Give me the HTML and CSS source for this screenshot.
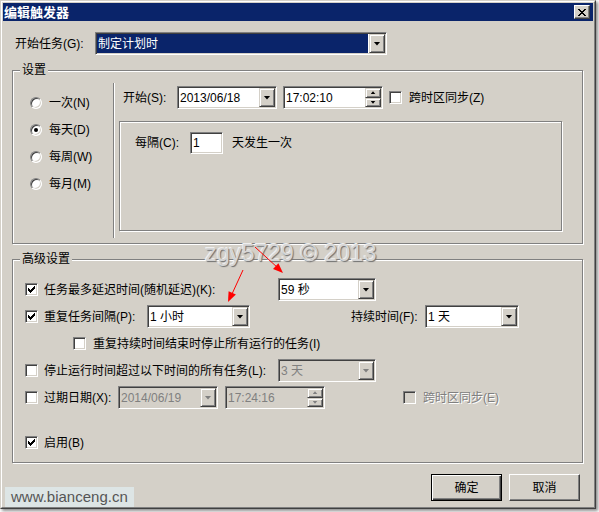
FILE: index.html
```html
<!DOCTYPE html>
<html lang="zh-CN">
<head>
<meta charset="utf-8">
<title>编辑触发器</title>
<link rel="stylesheet" href="styles.css">
</head>
<body>
<div class="page">
  <div class="window">
    <div class="frame">
      <div class="titlebar">
        <span class="title">编辑触发器</span>
        <span class="close"><svg width="8" height="7" viewBox="0 0 8 7" shape-rendering="crispEdges"><path d="M0 0h2v1H0zM6 0h2v1H6zM1 1h2v1H1zM5 1h2v1H5zM2 2h4v1H2zM3 3h2v1H3zM2 4h4v1H2zM1 5h2v1H1zM5 5h2v1H5zM0 6h2v1H0zM6 6h2v1H6z" fill="#000"/></svg></span>
      </div>
      <div class="content">
        <div class="task-row">
          <span class="task-label">开始任务(G):</span>
          <div class="combo sel w292"><span class="val">制定计划时</span><span class="dd"><i class="tri"></i></span></div>
        </div>

        <div class="group g1">
          <div class="gtitle">设置</div>
          <div class="g1-body">
            <div class="radios">
              <div class="ropt"><span class="radio"></span><span>一次(N)</span></div>
              <div class="ropt"><span class="radio on"></span><span>每天(D)</span></div>
              <div class="ropt"><span class="radio"></span><span>每周(W)</span></div>
              <div class="ropt"><span class="radio"></span><span>每月(M)</span></div>
            </div>
            <div class="vsep"></div>
            <div class="g1-right">
              <div class="start-row">
                <span class="start-label">开始(S):</span>
                <div class="combo w100"><span class="val">2013/06/18</span><span class="dd"><i class="tri"></i></span></div>
                <div class="combo w100 ml6"><span class="val">17:02:10</span><span class="spin"><span class="sb"><i class="up"></i></span><span class="sb"><i class="down"></i></span></span></div>
                <span class="cb ml6"></span>
                <span class="ml7">跨时区同步(Z)</span>
              </div>
              <div class="panel">
                <div class="every-row">
                  <span class="every-label">每隔(C):</span>
                  <div class="input"><span class="val">1</span></div>
                  <span class="ml9">天发生一次</span>
                </div>
              </div>
            </div>
          </div>
        </div>

        <div class="group g2">
          <div class="gtitle">高级设置</div>
          <div class="arow first">
            <span class="cb"><svg class="chk" width="7" height="7" viewBox="0 0 7 7" shape-rendering="crispEdges"><path d="M6 0h1v1H6zM5 1h2v1H5zM0 2h1v1H0zM4 2h3v1H4zM0 3h2v1H0zM3 3h3v1H3zM0 4h5v1H0zM1 5h3v1H1zM2 6h1v1H2z"/></svg></span>
            <span class="alabel w234">任务最多延迟时间(随机延迟)(K):</span>
            <div class="combo w98"><span class="val">59 秒</span><span class="dd"><i class="tri"></i></span></div>
          </div>
          <div class="arow">
            <span class="cb"><svg class="chk" width="7" height="7" viewBox="0 0 7 7" shape-rendering="crispEdges"><path d="M6 0h1v1H6zM5 1h2v1H5zM0 2h1v1H0zM4 2h3v1H4zM0 3h2v1H0zM3 3h3v1H3zM0 4h5v1H0zM1 5h3v1H1zM2 6h1v1H2z"/></svg></span>
            <span class="alabel w103">重复任务间隔(P):</span>
            <div class="combo w103"><span class="val">1 小时</span><span class="dd"><i class="tri"></i></span></div>
            <span class="dur-label">持续时间(F):</span>
            <div class="combo w94"><span class="val">1 天</span><span class="dd"><i class="tri"></i></span></div>
          </div>
          <div class="arow indent">
            <span class="cb"></span>
            <span class="ml7">重复持续时间结束时停止所有运行的任务(I)</span>
          </div>
          <div class="arow">
            <span class="cb"></span>
            <span class="alabel w234">停止运行时间超过以下时间的所有任务(L):</span>
            <div class="combo w98 dis"><span class="val">3 天</span><span class="dd"><i class="tri"></i></span></div>
          </div>
          <div class="arow">
            <span class="cb"></span>
            <span class="alabel w74">过期日期(X):</span>
            <div class="combo w100 dis"><span class="val">2014/06/19</span><span class="dd"><i class="tri"></i></span></div>
            <div class="combo w100 dis ml7"><span class="val">17:24:16</span><span class="spin"><span class="sb"><i class="up"></i></span><span class="sb"><i class="down"></i></span></span></div>
            <span class="cb dis ml78"></span>
            <span class="ml7 dtext">跨时区同步(E)</span>
          </div>
          <div class="arow last">
            <span class="cb"><svg class="chk" width="7" height="7" viewBox="0 0 7 7" shape-rendering="crispEdges"><path d="M6 0h1v1H6zM5 1h2v1H5zM0 2h1v1H0zM4 2h3v1H4zM0 3h2v1H0zM3 3h3v1H3zM0 4h5v1H0zM1 5h3v1H1zM2 6h1v1H2z"/></svg></span>
            <span class="ml6">启用(B)</span>
          </div>
        </div>

        <div class="buttons">
          <button class="btn default">确定</button>
          <button class="btn">取消</button>
        </div>
      </div>
    </div>
  </div>

  <div class="wm-copy">zgy5729 © 2013</div>
  <svg class="arrows" width="599" height="512" viewBox="0 0 599 512">
    <line x1="255" y1="247" x2="278" y2="268" stroke="#ff0000" stroke-width="1"/>
    <polygon points="283,273 273,269.1 278.4,263.3" fill="#ff0000"/>
    <line x1="243" y1="270" x2="232" y2="294" stroke="#ff0000" stroke-width="1"/>
    <polygon points="228,302 228.6,291.2 235.9,294.6" fill="#ff0000"/>
  </svg>
  <div class="wm-site">www.bianceng.cn</div>
</div>
</body>
</html>
```

FILE: styles.css
```css
* { box-sizing: border-box; }
html, body { margin: 0; padding: 0; background: #fff; }
body {
  font: 12px/14px "Liberation Sans", "Noto Sans CJK SC", sans-serif;
  color: #000;
}
.page { position: relative; width: 599px; height: 512px; overflow: hidden; }

.window {
  width: 596px;
  height: 509px;
  background: #d4d0c8;
  border: 1px solid;
  border-color: #d4d0c8 #404040 #404040 #d4d0c8;
  box-shadow: 2px 2px 3px rgba(0, 0, 0, 0.45);
}
.frame {
  height: 100%;
  border: 1px solid;
  border-color: #fff #808080 #808080 #fff;
  padding: 1px;
  display: flex;
  flex-direction: column;
}
.titlebar {
  height: 18px;
  flex: none;
  background: #0a246a;
  display: flex;
  align-items: center;
  justify-content: space-between;
  padding: 0 3px 0 1px;
}
.title {
  color: #fff;
  font: bold 13px/16px "Noto Sans CJK SC", sans-serif;
}
.close {
  width: 16px;
  height: 14px;
  background: #d4d0c8;
  border: 1px solid;
  border-color: #fff #404040 #404040 #fff;
  box-shadow: inset -1px -1px 0 #808080;
  display: flex;
  align-items: center;
  justify-content: center;
}
.close svg { display: block; }

.content { padding: 0 10px 0 9px; }

/* task row */
.task-row { display: flex; align-items: center; margin-top: 11px; height: 23px; }
.task-label { margin-left: 3px; width: 80px; }

/* combo / fields */
.combo, .input {
  display: flex;
  height: 23px;
  flex: none;
  background: #fff;
  border: 1px solid;
  border-color: #808080 #fff #fff #808080;
  box-shadow: inset 1px 1px 0 #404040, inset -1px -1px 0 #d4d0c8;
  padding: 1px;
}
.combo .val, .input .val {
  flex: 1;
  padding-left: 1px;
  display: flex;
  align-items: center;
  white-space: nowrap;
  overflow: hidden;
}
.combo.sel .val {
  background: #0a246a;
  color: #fff;
  margin-right: 1px;
}
.combo.dis { background: #d4d0c8; }
.combo.dis .val { color: #808080; }
.dd, .sb {
  width: 16px;
  flex: none;
  background: #d4d0c8;
  border: 1px solid;
  border-color: #d4d0c8 #404040 #404040 #d4d0c8;
  box-shadow: inset 1px 1px 0 #fff, inset -1px -1px 0 #808080;
  display: flex;
  align-items: center;
  justify-content: center;
}
.tri {
  display: block;
  width: 7px;
  height: 4px;
  background: #000;
  clip-path: polygon(0 0, 100% 0, 50% 100%);
}
.dis .tri, .dis .up, .dis .down { background: #808080; }
.spin { width: 16px; flex: none; display: flex; flex-direction: column; }
.sb { width: 16px; flex: 1; }
.up, .down { display: block; width: 5px; height: 3px; background: #000; }
.up { clip-path: polygon(50% 0, 100% 100%, 0 100%); }
.down { clip-path: polygon(0 0, 100% 0, 50% 100%); }
.input { width: 33px; height: 22px; }

.w292 { width: 292px; }
.w100 { width: 100px; }
.w98 { width: 98px; }
.w103 { width: 103px; }
.w94 { width: 94px; }
.ml6 { margin-left: 6px; }
.ml7 { margin-left: 7px; }
.ml9 { margin-left: 9px; }
.ml78 { margin-left: 78px; }

/* checkbox / radio */
.cb {
  width: 13px;
  height: 13px;
  flex: none;
  background: #fff;
  border: 1px solid;
  border-color: #808080 #fff #fff #808080;
  box-shadow: inset 1px 1px 0 #404040, inset -1px -1px 0 #d4d0c8;
  display: flex;
  align-items: center;
  justify-content: center;
}
.cb.dis { background: #d4d0c8; }
.chk { display: block; }
.radio {
  width: 12px;
  height: 12px;
  flex: none;
  border-radius: 50%;
  background: #fff;
  border: 1px solid;
  border-color: #808080 #fff #fff #808080;
  box-shadow: inset 1px 1px 0 #404040, inset -1px -1px 0 #d4d0c8;
  display: flex;
  align-items: center;
  justify-content: center;
}
.radio.on::after {
  content: "";
  width: 4px;
  height: 4px;
  border-radius: 50%;
  background: #000;
}

/* group boxes */
.group {
  border: 1px solid #808080;
  box-shadow: inset 1px 1px 0 #fff, 1px 1px 0 #fff;
  width: 571px;
}
.gtitle {
  width: fit-content;
  margin: -8px 0 0 7px;
  padding: 0 2px;
  background: #d4d0c8;
  line-height: 14px;
}
.g1 { margin-top: 15px; height: 174px; }
.g1-body { display: flex; margin-top: 6px; }
.radios { width: 100px; padding-top: 6px; }
.ropt { height: 27px; display: flex; align-items: center; padding-left: 17px; gap: 7px; }
.vsep { width: 2px; height: 155px; border-left: 1px solid #808080; border-right: 1px solid #fff; }
.g1-right { padding-top: 3px; }
.start-row { display: flex; align-items: center; height: 23px; padding-left: 8px; }
.start-label { width: 54px; }
.panel {
  margin: 12px 0 0 4px;
  width: 443px;
  height: 110px;
  border: 1px solid #808080;
  box-shadow: inset 1px 1px 0 #fff, 1px 1px 0 #fff;
}
.every-row { display: flex; align-items: center; margin-top: 10px; padding-left: 15px; height: 22px; }
.every-label { width: 55px; }

.g2 { margin-top: 15px; height: 204px; }
.arow { display: flex; align-items: center; height: 23px; padding-left: 12px; margin-top: 4px; white-space: nowrap; }
.arow.first { margin-top: 12px; }
.arow.last { margin-top: 22px; }
.arow.indent { padding-left: 60px; }
.alabel { margin-left: 6px; flex: none; }
.w234 { width: 234px; }
.w74 { width: 74px; }
.dur-label { margin-left: 101px; width: 74px; flex: none; }
.dtext { color: #808080; text-shadow: 1px 1px 0 #fff; }

/* buttons */
.buttons { display: flex; justify-content: flex-end; gap: 7px; margin-top: 11px; padding-right: 3px; }
.btn {
  width: 71px;
  height: 27px;
  font: 12px/14px "Liberation Sans", "Noto Sans CJK SC", sans-serif;
  color: #000;
  background: #d4d0c8;
  border: 1px solid;
  border-color: #fff #404040 #404040 #fff;
  box-shadow: inset -1px -1px 0 #808080, inset 1px 1px 0 #d4d0c8;
  padding: 0;
}
.btn.default {
  border: 1px solid #000;
  box-shadow: inset 1px 1px 0 #fff, inset -1px -1px 0 #404040, inset -2px -2px 0 #808080;
}

/* overlays */
.wm-copy {
  position: absolute;
  left: 205px;
  top: 240px;
  font: 23.5px/27px "Liberation Sans", sans-serif;
  color: #d6d6d6;
  text-shadow: 1px 1px 1px #707070, -1px -1px 0 #eeeeee;
  white-space: nowrap;
}
.arrows { position: absolute; left: 0; top: 0; pointer-events: none; }
.wm-site {
  position: absolute;
  left: 5px;
  top: 487px;
  width: 129px;
  height: 20px;
  padding-left: 6px;
  background: #dde5e5;
  color: #555;
  font: 15px/20px "Liberation Sans", sans-serif;
  white-space: nowrap;
}
```
